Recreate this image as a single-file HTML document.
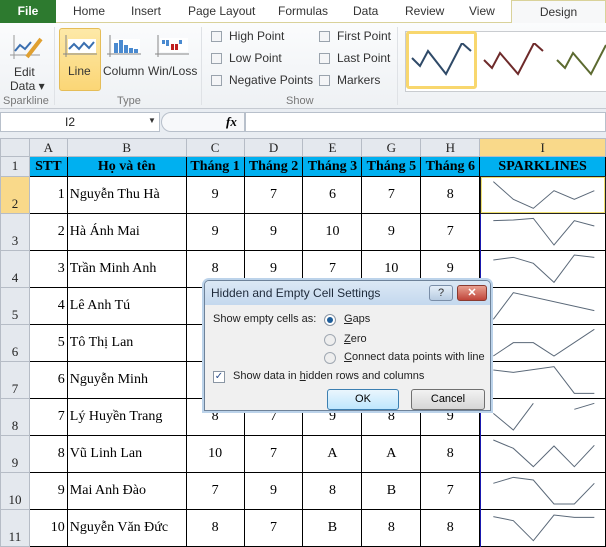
<!DOCTYPE html>
<html><head><meta charset="utf-8"><style>
*{margin:0;padding:0;box-sizing:border-box}
body{width:606px;height:547px;overflow:hidden;background:#fff;font-family:"Liberation Sans",sans-serif;position:relative}
.abs{position:absolute}
.tabs{left:0;top:0;width:606px;height:23px;background:#fff;border-bottom:1px solid #d9d29a}
.tab{position:absolute;top:4px;font-size:12px;color:#333}
.file{left:0;top:0;width:56px;height:23px;background:#2d7a2f;color:#fff;font-size:12px;font-weight:bold;text-align:center;line-height:22px;position:absolute}
.design{position:absolute;left:511px;top:0;width:95px;height:24px;border:1px solid #d9d29a;border-bottom:none;background:#f7f8f9;font-size:12px;color:#333;text-align:center;line-height:22px}
.ribbon{left:0;top:23px;width:606px;height:86px;background:linear-gradient(#fbfcfd,#eef1f4);border-bottom:1px solid #c5cad1}
.lbl{position:absolute;font-size:12px;color:#333}
.glbl{position:absolute;font-size:11px;color:#777}
.sep{position:absolute;top:4px;width:1px;height:78px;background:#dfe2e6}
.cb{position:absolute;width:11px;height:11px;border:1px solid #9aa3ad;background:#f4f5f7}
.fbar{left:0;top:109px;width:606px;height:29px;background:#e9edf2}
table{position:absolute;left:0;top:138px;border-collapse:collapse;table-layout:fixed}
td{border:1px solid #000;font-family:"Liberation Serif",serif;font-size:14px;text-align:center;padding:0;overflow:hidden;white-space:nowrap}
td.rh{background:#e4e8ee;border:1px solid #b6bcc6;font-size:13px;vertical-align:bottom;padding-bottom:1px;color:#222}
tr.ch td{background:#e4e8ee;border:1px solid #b6bcc6;font-size:13px;height:18px;vertical-align:middle;color:#222}
tr.h1 td.d{background:#00b0f0;font-weight:bold;font-size:14px;height:20px}
td.n{text-align:right;padding-right:2px}
td.nm{text-align:left;padding-left:2px}
.dlg{left:204px;top:280px;width:287px;height:131px;background:#f0f0f0;border:1px solid #6e8299;border-radius:5px 5px 0 0;box-shadow:0 0 0 2px #bcd3ea}
</style></head><body>
<div class="abs tabs">
<div class="file">File</div>
<span class="tab" style="left:73px">Home</span>
<span class="tab" style="left:131px">Insert</span>
<span class="tab" style="left:188px">Page Layout</span>
<span class="tab" style="left:278px">Formulas</span>
<span class="tab" style="left:353px">Data</span>
<span class="tab" style="left:405px">Review</span>
<span class="tab" style="left:469px">View</span>
<div class="design">Design</div>
</div>
<div class="abs ribbon">
<svg class="abs" style="left:10px;top:10px" width="34" height="28"><line x1="4" y1="2" x2="4" y2="26" stroke="#999"/><line x1="0" y1="22" x2="30" y2="22" stroke="#999"/><polyline points="5,18 10,12 15,16 21,9" fill="none" stroke="#3a6fb0" stroke-width="2"/><line x1="17" y1="24" x2="31" y2="6" stroke="#e0a030" stroke-width="4"/></svg>
<div class="lbl" style="left:14px;top:42px">Edit</div>
<div class="lbl" style="left:10px;top:56px">Data ▾</div>
<div class="glbl" style="left:3px;top:72px">Sparkline</div>
<div class="sep" style="left:54px"></div>
<div class="abs" style="left:59px;top:5px;width:42px;height:63px;background:linear-gradient(#fde9a8,#fbd676);border:1px solid #e5bd58;border-radius:3px"></div>
<svg class="abs" style="left:63px;top:12px" width="34" height="24"><line x1="3" y1="0" x2="3" y2="22" stroke="#888"/><line x1="0" y1="19" x2="34" y2="19" stroke="#888"/><rect x="5" y="4" width="28" height="14" fill="#fff"/><polyline points="6,14 11,9 16,14 21,8 26,13 31,7" fill="none" stroke="#3a6fb0" stroke-width="2"/></svg>
<div class="lbl" style="left:68px;top:41px">Line</div>
<svg class="abs" style="left:107px;top:12px" width="34" height="24"><line x1="3" y1="0" x2="3" y2="22" stroke="#888"/><line x1="0" y1="19" x2="34" y2="19" stroke="#888"/><rect x="5" y="4" width="28" height="14" fill="#fff"/><rect x="7" y="8" width="4" height="10" fill="#4a8ad0"/><rect x="12" y="5" width="4" height="13" fill="#4a8ad0"/><rect x="17" y="10" width="4" height="8" fill="#4a8ad0"/><rect x="22" y="13" width="4" height="5" fill="#4a8ad0"/><rect x="27" y="14" width="4" height="4" fill="#4a8ad0"/></svg>
<div class="lbl" style="left:103px;top:41px">Column</div>
<svg class="abs" style="left:155px;top:12px" width="34" height="24"><line x1="3" y1="0" x2="3" y2="22" stroke="#888"/><line x1="0" y1="19" x2="34" y2="19" stroke="#888"/><rect x="5" y="3" width="28" height="14" fill="#fff"/><rect x="7" y="5" width="3" height="4" fill="#4a8ad0"/><rect x="11" y="5" width="3" height="6" fill="#4a8ad0"/><rect x="16" y="9" width="3" height="6" fill="#c02020"/><rect x="20" y="9" width="3" height="6" fill="#c02020"/><rect x="24" y="5" width="3" height="4" fill="#4a8ad0"/></svg>
<div class="lbl" style="left:148px;top:41px">Win/Loss</div>
<div class="glbl" style="left:117px;top:72px">Type</div>
<div class="sep" style="left:201px"></div>
<div class="cb" style="left:211px;top:8px"></div><div class="lbl" style="left:229px;top:6px">High Point</div>
<div class="cb" style="left:211px;top:30px"></div><div class="lbl" style="left:229px;top:28px">Low Point</div>
<div class="cb" style="left:211px;top:52px"></div><div class="lbl" style="left:229px;top:50px">Negative Points</div>
<div class="cb" style="left:319px;top:8px"></div><div class="lbl" style="left:337px;top:6px">First Point</div>
<div class="cb" style="left:319px;top:30px"></div><div class="lbl" style="left:337px;top:28px">Last Point</div>
<div class="cb" style="left:319px;top:52px"></div><div class="lbl" style="left:337px;top:50px">Markers</div>
<div class="glbl" style="left:286px;top:72px">Show</div>
<div class="sep" style="left:397px"></div>
<div class="abs" style="left:405px;top:8px;width:201px;height:61px;border:1px solid #c9ccd0;border-right:none;background:#fff"></div>
<div class="abs" style="left:406px;top:8px;width:71px;height:58px;border:3px solid #f8d76e;border-radius:3px;background:#fff"></div>
<svg class="abs" style="left:400px;top:20px" width="206" height="40"><polyline points="12,15 20,23 28,8 46,31 62,0 71,8" fill="none" stroke="#2f4a68" stroke-width="2"/><polyline points="84,17 92,25 100,10 118,31 134,0 143,8" fill="none" stroke="#6e2a2a" stroke-width="2"/><polyline points="157,17 165,25 173,10 191,31 206,2" fill="none" stroke="#5c6a30" stroke-width="2"/></svg>
</div>
<div class="abs fbar">
<div class="abs" style="left:0;top:3px;width:160px;height:20px;background:#fff;border:1px solid #b8c0cb"></div>
<div class="abs" style="left:65px;top:6px;font-size:12px;color:#222">I2</div>
<div class="abs" style="left:148px;top:7px;font-size:8px;color:#333">▼</div>
<div class="abs" style="left:161px;top:3px;width:84px;height:20px;background:#f7f8fa;border:1px solid #b8c0cb;border-radius:10px 0 0 10px"></div>
<div class="abs" style="left:226px;top:5px;font-family:'Liberation Serif',serif;font-style:italic;font-weight:bold;font-size:13px">fx</div>
<div class="abs" style="left:245px;top:3px;width:361px;height:20px;background:#fff;border:1px solid #b8c0cb"></div>
</div>
<table>
<colgroup><col style="width:29px"><col style="width:38px"><col style="width:119px"><col style="width:58px"><col style="width:59px"><col style="width:59px"><col style="width:59px"><col style="width:59px"><col style="width:126px"></colgroup>
<tr class="ch"><td></td><td>A</td><td>B</td><td>C</td><td>D</td><td>E</td><td>G</td><td>H</td><td style="background:#f9d98a">I</td></tr>
<tr class="h1"><td class="rh" style="vertical-align:middle">1</td><td class="d">STT</td><td class="d">Họ và tên</td><td class="d">Tháng 1</td><td class="d">Tháng 2</td><td class="d">Tháng 3</td><td class="d">Tháng 5</td><td class="d">Tháng 6</td><td class="d">SPARKLINES</td></tr>
<tr style="height:37px"><td class="rh" style="background:#f9d98a">2</td><td class="n">1</td><td class="nm">Nguyễn Thu Hà</td><td>9</td><td>7</td><td>6</td><td>7</td><td>8</td><td></td></tr>
<tr style="height:37px"><td class="rh">3</td><td class="n">2</td><td class="nm">Hà Ánh Mai</td><td>9</td><td>9</td><td>10</td><td>9</td><td>7</td><td></td></tr>
<tr style="height:37px"><td class="rh">4</td><td class="n">3</td><td class="nm">Trần Minh Anh</td><td>8</td><td>9</td><td>7</td><td>10</td><td>9</td><td></td></tr>
<tr style="height:37px"><td class="rh">5</td><td class="n">4</td><td class="nm">Lê Anh Tú</td><td>7</td><td>10</td><td>9</td><td>9</td><td>8</td><td></td></tr>
<tr style="height:37px"><td class="rh">6</td><td class="n">5</td><td class="nm">Tô Thị Lan</td><td>7</td><td>8</td><td>8</td><td>7</td><td>9</td><td></td></tr>
<tr style="height:37px"><td class="rh">7</td><td class="n">6</td><td class="nm">Nguyễn Minh</td><td>8</td><td>8</td><td>8</td><td>7</td><td>7</td><td></td></tr>
<tr style="height:37px"><td class="rh">8</td><td class="n">7</td><td class="nm">Lý Huyền Trang</td><td>8</td><td>7</td><td>9</td><td>8</td><td>9</td><td></td></tr>
<tr style="height:37px"><td class="rh">9</td><td class="n">8</td><td class="nm">Vũ Linh Lan</td><td>10</td><td>7</td><td>A</td><td>A</td><td>8</td><td></td></tr>
<tr style="height:37px"><td class="rh">10</td><td class="n">9</td><td class="nm">Mai Anh Đào</td><td>7</td><td>9</td><td>8</td><td>B</td><td>7</td><td></td></tr>
<tr style="height:37px"><td class="rh">11</td><td class="n">10</td><td class="nm">Nguyễn Văn Đức</td><td>8</td><td>7</td><td>B</td><td>8</td><td>8</td><td></td></tr>
</table>
<div class="abs" style="left:480px;top:176px;width:1px;height:371px;background:#1a1ab0"></div>
<div class="abs" style="left:480px;top:176px;width:126px;height:38px;border:1px solid #222;outline:1px solid #f0e070;outline-offset:-2px"></div>
<svg class="abs" style="left:470px;top:170px" width="136" height="377" viewBox="0 0 408 1131"><g fill="none" stroke="#5a6878" stroke-width="3">
<polyline points="70,35 130,88 190,115 252,62 313,88 373,62"/>
<polyline points="70,152 130,150 190,145 252,225 313,152 373,168"/>
<polyline points="70,270 130,262 190,280 252,337 313,255 373,262"/>
<polyline points="70,448 130,368 373,422"/>
<polyline points="70,558 130,518 190,518 252,558 373,478"/>
<polyline points="70,600 130,607 252,590 313,670 373,670"/>
<polyline points="70,730 130,780 190,700"/><polyline points="313,718 373,700"/>
<polyline points="70,810 130,835 190,890 252,828 313,890 373,826"/>
<polyline points="70,940 130,922 190,930 252,1002 313,1002 373,940"/>
<polyline points="70,1040 130,1052 190,1112 252,1035 313,1042 373,1042"/>
</g></svg>
<div class="abs dlg">
<div class="abs" style="left:0;top:0;width:285px;height:24px;background:linear-gradient(#dbe8f5,#c4d8ee);border-radius:4px 4px 0 0"></div>
<div class="abs" style="left:6px;top:5px;font-size:12px;color:#1e2a3a">Hidden and Empty Cell Settings</div>
<div class="abs" style="left:224px;top:4px;width:24px;height:16px;border:1px solid #7a8ea8;border-radius:3px;background:linear-gradient(#e4eef8,#b8cce2);font-size:11px;text-align:center;line-height:14px;color:#333">?</div>
<div class="abs" style="left:252px;top:4px;width:30px;height:16px;border:1px solid #8a3a30;border-radius:3px;background:linear-gradient(#e8a090,#c0453a);font-size:11px;font-weight:bold;text-align:center;line-height:14px;color:#fff">✕</div>
<div class="abs" style="left:8px;top:32px;font-size:11px;color:#222">Show empty cells as:</div>
<div class="abs" style="left:119px;top:33px;width:12px;height:12px;border:1px solid #8a96a4;border-radius:50%;background:#fff"><div style="margin:2px;width:6px;height:6px;border-radius:50%;background:#1d5d9a"></div></div>
<div class="abs" style="left:139px;top:32px;font-size:11px;color:#222"><u>G</u>aps</div>
<div class="abs" style="left:119px;top:53px;width:12px;height:12px;border:1px solid #a0a8b2;border-radius:50%;background:#eee"></div>
<div class="abs" style="left:139px;top:52px;font-size:11px;color:#222"><u>Z</u>ero</div>
<div class="abs" style="left:119px;top:71px;width:12px;height:12px;border:1px solid #a0a8b2;border-radius:50%;background:#eee"></div>
<div class="abs" style="left:139px;top:70px;font-size:11px;color:#222"><u>C</u>onnect data points with line</div>
<div class="abs" style="left:8px;top:90px;width:12px;height:12px;border:1px solid #8a96a4;background:#fff;font-size:10px;line-height:10px;color:#2a4d8a;text-align:center">✓</div>
<div class="abs" style="left:28px;top:89px;font-size:11px;color:#222">Show data in <u>h</u>idden rows and columns</div>
<div class="abs" style="left:122px;top:108px;width:72px;height:21px;border:1px solid #3c7fb1;border-radius:3px;background:linear-gradient(#eaf6fd,#bee6fd);font-size:11px;text-align:center;line-height:19px">OK</div>
<div class="abs" style="left:206px;top:108px;width:74px;height:21px;border:1px solid #707070;border-radius:3px;background:linear-gradient(#f2f2f2,#d6d6d6);font-size:11px;text-align:center;line-height:19px">Cancel</div>
</div>
</body></html>
